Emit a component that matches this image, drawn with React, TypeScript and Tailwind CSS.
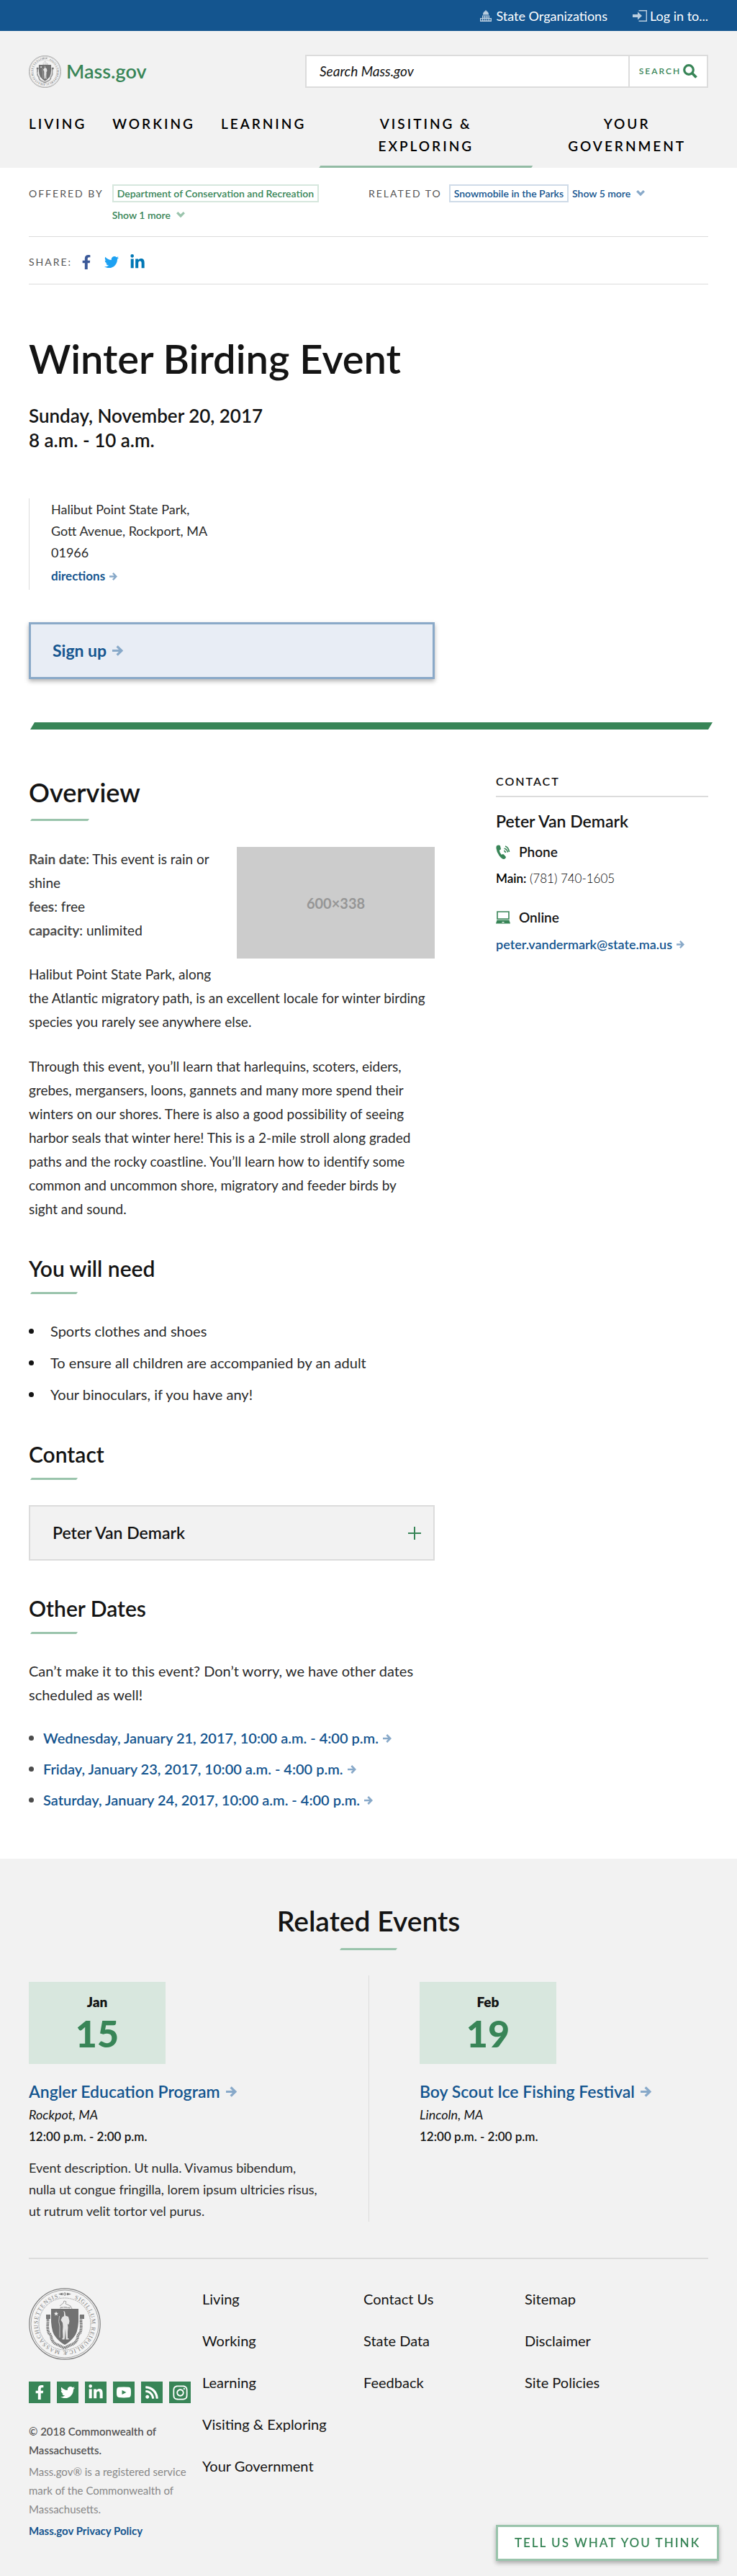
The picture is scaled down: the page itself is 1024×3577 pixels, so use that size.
import { useState, type ReactNode } from "react";
import { FaFacebookF, FaInstagram, FaLinkedinIn, FaRss, FaTwitter } from "react-icons/fa";

const slant = "[clip-path:polygon(2px_0,100%_0,calc(100%-2px)_100%,0_100%)]";

function Arrow({ className = "h-3 w-3" }: { className?: string }) {
  return (
    <svg viewBox="0 0 14 14" aria-hidden="true" className={`inline-block shrink-0 text-[#88a9c9] ${className}`}>
      <path d="M0 7h11M6.2 1.2 12 7l-5.800 5.800" fill="none" stroke="currentColor" strokeWidth="3" />
    </svg>
  );
}

function Chevron({ className }: { className: string }) {
  return (
    <svg viewBox="0 0 12 9" aria-hidden="true" className={`h-[9px] w-3 ${className}`}>
      <path d="M1.200 1.200 6 6l4.800-4.800" fill="none" stroke="currentColor" strokeWidth="3.200" />
    </svg>
  );
}

function Seal({ id, className }: { id: string; className: string }) {
  return (
    <svg viewBox="0 0 100 100" role="img" aria-label="State seal" className={className}>
      <defs>
        <path id={id} d="M50 12.500a37.500 37.500 0 1 1 0 75a37.500 37.500 0 1 1 0-75" />
      </defs>
      <circle cx="50" cy="50" r="49.200" fill="#f4f4f4" stroke="#7d7d7d" strokeWidth="1.200" />
      <circle cx="50" cy="50" r="47" fill="none" stroke="#8b8b8b" strokeWidth=".8" />
      <circle cx="50" cy="50" r="36" fill="none" stroke="#8b8b8b" strokeWidth="1" strokeDasharray="1 .8" />
      <g fill="#7b7b7b" fontFamily="Liberation Serif, serif" fontSize="8" letterSpacing="1">
        <text><textPath href={`#${id}`} startOffset="13.500">SIGILLUM</textPath></text>
        <text><textPath href={`#${id}`} startOffset="62.500">REIPUBLICÆ</textPath></text>
        <text><textPath href={`#${id}`} startOffset="124">MASSACHUSETTENSIS.</textPath></text>
      </g>
      <circle cx="50" cy="8.500" r="1.600" fill="none" stroke="#777" />
      <path d="m41 8.500 6-1.800v3.600zM59 8.500l-6-1.800v3.600z" fill="#777" />
      <path d="m43 25 5-4 1-3 3 1-1 3 7 3 2 4M44 27h3m2 0h4m2 0h3M43 28q7-3 14 0" fill="none" stroke="#a5a5a5" />
      <path d="M26.500 38v9q-1 11 1.500 16 3 2 3.500 7 2 7 9 9l9 4.500 9-4.500q7-2 9-9 .5-5 3.500-7 2.500-5 1.500-16v-9" fill="none" stroke="#777" strokeWidth="3.800" strokeDasharray="1.500 .7" />
      <path d="M24 37h6v6h-6zM71 37h6v6h-6z" fill="#777" />
      <path d="M31 29h38v18q-1 16-7 22-6 7-12 10-6-3-12-10-6-6-7-22z" fill="#727272" />
      <path d="m38 32.500.9 2.200 2.400.1-1.900 1.500.7 2.300-2.100-1.300-2 1.300.7-2.300-1.900-1.500 2.400-.1z" fill="#f4f4f4" />
      <path d="m49 34-1-2 2 .7.500 2.300.5 3.500 4 1.500 1.500 6-1 5-1.500-1 .5 5-.5 6v9h1.500v1.500h-4v-2l-.5-13-1 13-.5 2h-3v-1.500l1-1-.5-9 .5-6.500-.5-5-2.500-4 2-4 2.500-1.500z" fill="#e4e4e4" />
      <path d="M42.500 39q-2 8 .5 14v16" fill="none" stroke="#cfcfcf" strokeWidth=".9" />
    </svg>
  );
}

function Rule({ className = "w-[68px]" }: { className?: string }) {
  return <div className={`h-[3px] bg-[#9ac4ac] ${slant} ${className}`} />;
}

function Heading({ children }: { children: ReactNode }) {
  return (
    <>
      <h2 className="mt-[46px] text-3xl leading-10 font-semibold">{children}</h2>
      <Rule className="mt-[13px] ml-0.5 w-[66px]" />
    </>
  );
}

const socials = [
  { name: "Facebook", icon: <FaFacebookF className="h-5 w-5" /> },
  { name: "Twitter", icon: <FaTwitter className="h-5 w-5" /> },
  { name: "LinkedIn", icon: <FaLinkedinIn className="h-[22px] w-[22px]" /> },
  {
    name: "YouTube",
    icon: (
      <svg viewBox="0 0 20 16" className="h-4 w-5">
        <path fillRule="evenodd" fill="currentColor" d="M3 .8Q10 0 17 .8q2.500.2 2.800 3 .4 4 0 8-.3 3-2.800 3.300-7 .7-14 0-2.500-.3-2.800-3-.4-4 0-8Q.5 1 3 .8zM7.500 5v6l6-3z" />
      </svg>
    ),
  },
  { name: "RSS", icon: <FaRss className="h-5 w-5" /> },
  { name: "Instagram", icon: <FaInstagram className="h-[23px] w-[23px]" /> },
];

const dates = [
  "Wednesday, January 21, 2017, 10:00 a.m. - 4:00 p.m.",
  "Friday, January 23, 2017, 10:00 a.m. - 4:00 p.m.",
  "Saturday, January 24, 2017, 10:00 a.m. - 4:00 p.m.",
];

const events = [
  { month: "Jan", day: "15", title: "Angler Education Program", place: "Rockpot, MA", text: "Event description. Ut nulla. Vivamus bibendum, nulla ut congue fringilla, lorem ipsum ultricies risus, ut rutrum velit tortor vel purus." },
  { month: "Feb", day: "19", title: "Boy Scout Ice Fishing Festival", place: "Lincoln, MA", text: "" },
];

const footerLinks = [
  ["Living", "Working", "Learning", "Visiting & Exploring", "Your Government"],
  ["Contact Us", "State Data", "Feedback"],
  ["Sitemap", "Disclaimer", "Site Policies"],
];

function Header() {
  return (
    <header>
      <div className="flex h-[43px] items-center justify-end gap-[35px] bg-[#14558f] px-10 text-lg text-white">
        <a href="#orgs" className="flex items-center gap-1.5">
          <svg viewBox="0 0 16 16" className="h-4 w-4 text-[#b9cddf]" fill="currentColor" aria-hidden="true">
            <path d="M7.500 0h1v1.200Q11.500 2 12 5.500v1H4v-1Q4.500 2 7.500 1.200zM3 7.500h10V11h3v5H0v-5h3zm1.300 1v2h1.500v-2zm3 0v2h1.500v-2zm3 0v2h1.500v-2zM1.500 12v2.500H3V12zm3 0v2.500H6V12zm2.800 0v2.500h1.500V12zm2.700 0v2.500h1.500V12zm3 0v2.500h1.500V12z" fillRule="evenodd" />
          </svg>
          State Organizations
        </a>
        <button type="button" className="flex items-center gap-1">
          <svg viewBox="0 0 20 16" className="h-4 w-5 text-[#b9cddf]" aria-hidden="true">
            <path d="M8.500.7h10.800v14.600H8.500" fill="none" stroke="currentColor" strokeWidth="1.400" />
            <path d="M0 6h7V2.500L13 8l-6 5.500V10H0z" fill="currentColor" />
          </svg>
          Log in to...
        </button>
      </div>
      <div className="bg-[#f2f2f2] pt-[33px]">
        <div className="flex items-center justify-between px-10">
          <a href="#home" className="flex items-center gap-[7px] text-[27px] leading-8 font-semibold text-[#388557]">
            <Seal id="seal-small" className="h-[45px] w-[45px]" />
            Mass.gov
          </a>
          <form className="flex h-[46px] w-[560px] border-2 border-[#dcdcdc] bg-white" onSubmit={(e) => e.preventDefault()}>
            <input aria-label="Search Mass.gov" placeholder="Search Mass.gov" className="min-w-0 flex-1 bg-transparent px-[18px] text-[19px] italic outline-none placeholder:text-[#141414]" />
            <button type="submit" className="flex w-[109px] items-center justify-center gap-[3px] border-l-2 border-[#dcdcdc] text-xs font-semibold tracking-[2px] text-[#388557]">
              SEARCH
              <svg viewBox="0 0 20 20" className="h-5 w-5" fill="none" stroke="currentColor" aria-hidden="true">
                <circle cx="8" cy="8" r="6.300" strokeWidth="3.200" />
                <path d="m12.500 12.500 6 6" strokeWidth="3.800" />
              </svg>
            </button>
          </form>
        </div>
        <nav className="mt-5 flex px-[22px] text-[19px] leading-[31px] font-semibold tracking-[3px] text-black">
          <a href="#living" className="px-[18px] pt-[14px]">LIVING</a>
          <a href="#working" className="px-[18px] pt-[14px]">WORKING</a>
          <a href="#learning" className="px-[18px] pt-[14px]">LEARNING</a>
          <a href="#visiting" className="w-[297px] shrink-0 pt-[14px] text-center">
            VISITING &amp;<br />EXPLORING
            <span className={`mt-3 block h-[3px] bg-[#92bba4] ${slant}`} />
          </a>
          <a href="#government" className="flex-1 px-[18px] pt-[14px] text-center">
            YOUR<br />GOVERNMENT
          </a>
        </nav>
      </div>
    </header>
  );
}

function Relations() {
  return (
    <>
      <div className="grid grid-cols-2 border-b border-[#dcdcdc] pt-[23px] pb-[17px] text-sm leading-[25px]">
        <div className="flex items-start gap-3">
          <span className="tracking-[2px] whitespace-nowrap text-[#555]">OFFERED BY</span>
          <div className="font-semibold text-[#388557]">
            <a href="#dcr" className="block border-2 border-[#d6e7dd] px-[5px] leading-[21px]">Department of Conservation and Recreation</a>
            <button type="button" className="mt-[5px] flex items-center gap-2">Show 1 more <Chevron className="text-[#9ac4ac]" /></button>
          </div>
        </div>
        <div className="flex items-start gap-[5px]">
          <span className="mr-[5px] tracking-[2px] whitespace-nowrap text-[#555]">RELATED TO</span>
          <a href="#snow" className="border-2 border-[#cfdbe8] px-[5px] leading-[21px] font-semibold text-[#14558f]">Snowmobile in the Parks</a>
          <button type="button" className="flex items-center gap-2 font-semibold text-[#14558f]">Show 5 more <Chevron className="text-[#88a9c9]" /></button>
        </div>
      </div>
      <div className="flex h-[66px] items-center border-b border-[#dcdcdc] pt-[5px]">
        <span className="text-sm tracking-[2px] text-[#555]">SHARE:</span>
        <a href="#fb" aria-label="Facebook" className="ml-2.5 text-[#3b5998]"><FaFacebookF className="h-5 w-5" /></a>
        <a href="#tw" aria-label="Twitter" className="ml-[15px] text-[#1da1f2]"><FaTwitter className="h-5 w-5" /></a>
        <a href="#in" aria-label="LinkedIn" className="ml-[15px] text-[#0077b5]"><FaLinkedinIn className="h-[22px] w-[22px]" /></a>
      </div>
    </>
  );
}

function Sidebar() {
  return (
    <aside className="w-[295px] shrink-0">
      <h2 className="border-b-2 border-[#dcdcdc] pb-2 text-base leading-6 font-semibold tracking-[2px]">CONTACT</h2>
      <h3 className="mt-[18px] text-[23px] leading-[30px] font-semibold">Peter Van Demark</h3>
      <h4 className="mt-4 flex items-center gap-3 text-[19px] leading-6 font-semibold">
        <svg viewBox="0 0 20 20" className="h-5 w-5 text-[#388557]" aria-hidden="true">
          <path d="M1 1.500Q4-.5 6 1.500L7 6Q6 7.500 4.800 7.500 5 11 8 14q1.500-1.500 3-.5l3 3.500q0 2-2.500 3Q8 20 4.500 15T.5 5Q.3 3 1 1.500z" fill="currentColor" />
          <path d="M11 8.500q2 0 2.500 2.500M11.500 5.200q4 .5 5 5.300M13 2q4.500 1.500 5.500 8" fill="none" stroke="currentColor" strokeWidth="1.600" />
        </svg>
        Phone
      </h4>
      <p className="mt-[13px] text-[17px] leading-6 font-light text-black"><span className="font-semibold">Main:</span> (781) 740-1605</p>
      <h4 className="mt-[30px] flex items-center gap-3 text-[19px] leading-6 font-semibold">
        <svg viewBox="0 0 20 18" className="h-[18px] w-5 text-[#388557]" aria-hidden="true">
          <path d="M2 1h16v10H2z" fill="none" stroke="currentColor" strokeWidth="1.600" />
          <path fillRule="evenodd" d="M1.500 12.500h17L20 17.500H0zm7 2.500v1.200h3V15z" fill="currentColor" />
        </svg>
        Online
      </h4>
      <a href="mailto:peter.vandermark@state.ma.us" className="mt-[13px] flex items-center gap-1.5 text-lg leading-6 font-semibold text-[#14558f]">
        peter.vandermark@state.ma.us <Arrow className="h-[11px] w-[11px]" />
      </a>
    </aside>
  );
}

export default function App() {
  const [open, setOpen] = useState(false);
  return (
    <div className="bg-white font-['Lato',sans-serif] text-[#141414]">
      <Header />
      <main>
        <div className="px-10">
          <Relations />
          <h1 className="mt-[71px] text-[56px] leading-[64px] font-semibold">Winter Birding Event</h1>
          <p className="mt-[30px] text-[26px] leading-[34px] font-semibold">
            Sunday, November 20, 2017<br />8 a.m. - 10 a.m.
          </p>
          <address className="mt-16 border-l border-[#dcdcdc] pb-1 pl-[30px] text-lg leading-[30px] text-[#2b2b2b] not-italic">
            Halibut Point State Park,<br />Gott Avenue, Rockport, MA<br />01966
            <a href="#directions" className="mt-[3px] flex items-center gap-1.5 text-[17px] font-bold text-[#14558f]">
              directions <Arrow className="h-[11px] w-[11px]" />
            </a>
          </address>
          <a href="#signup" className="mt-[45px] flex h-[79px] max-w-[564px] items-center gap-2 border-[3px] border-[#8aa9c8] bg-[#e8edf5] px-[30px] text-[23px] font-bold text-[#14558f] shadow-[0_3px_6px_rgba(0,0,0,0.3)]">
            Sign up <Arrow className="h-[15px] w-[15px]" />
          </a>
          <div className="mt-[60px] -mr-1.5 ml-0.5 h-2.5 bg-[#388557] [clip-path:polygon(6px_0,100%_0,calc(100%-6px)_100%,0_100%)]" />
          <div className="mt-[60px] flex justify-between gap-10 pb-[65px]">
            <div className="min-w-0 max-w-[564px] flex-1 pt-1">
              <h2 className="text-4xl leading-[46px] font-semibold">Overview</h2>
              <Rule className="mt-[14px] ml-0.5 w-[82px]" />
              <div className="mt-9 text-[19px] leading-[33px] text-[#2b2b2b]">
                <div role="img" aria-label="Placeholder" className="float-right mb-3 ml-5 flex h-[155px] w-[275px] items-center justify-center bg-[#ccc] text-xl font-bold text-[#969696]">600×338</div>
                <p>
                  <strong className="font-bold text-[#4c4c4c]">Rain date</strong>: This event is rain or shine<br />
                  <strong className="font-bold text-[#4c4c4c]">fees</strong>: free<br />
                  <strong className="font-bold text-[#4c4c4c]">capacity</strong>: unlimited
                </p>
                <p className="mt-7">Halibut Point State Park, along the Atlantic migratory path, is an excellent locale for winter birding species you rarely see anywhere else.</p>
                <p className="mt-[29px] pr-4">Through this event, you’ll learn that harlequins, scoters, eiders, grebes, mergansers, loons, gannets and many more spend their winters on our shores. There is also a good possibility of seeing harbor seals that winter here! This is a 2-mile stroll along graded paths and the rocky coastline. You’ll learn how to identify some common and uncommon shore, migratory and feeder birds by sight and sound.</p>
              </div>
              <Heading>You will need</Heading>
              <ul className="mt-[35px] flex flex-col gap-[11px] text-xl leading-[33px] text-[#2b2b2b]">
                {["Sports clothes and shoes", "To ensure all children are accompanied by an adult", "Your binoculars, if you have any!"].map((t) => (
                  <li key={t} className="flex items-center gap-[23px]"><span className="h-[7px] w-[7px] rounded-full bg-[#141414]" />{t}</li>
                ))}
              </ul>
              <Heading>Contact</Heading>
              <button type="button" aria-expanded={open} onClick={() => setOpen(!open)} className="mt-[35px] flex h-[77px] w-full items-center justify-between border-2 border-[#dcdcdc] bg-[#f2f2f2] pr-[17px] pl-[31px] text-[23px] font-semibold">
                Peter Van Demark
                <svg viewBox="0 0 18 18" className="h-[18px] w-[18px]" aria-hidden="true"><path d="M9 0v18M0 9h18" stroke="#388557" strokeWidth="2" /></svg>
              </button>
              <Heading>Other Dates</Heading>
              <p className="mt-[35px] text-xl leading-[33px] text-[#2b2b2b]">Can’t make it to this event? Don’t worry, we have other dates scheduled as well!</p>
              <ul className="mt-[27px] flex flex-col gap-2.5 text-xl leading-[33px] font-semibold text-[#14558f]">
                {dates.map((d) => (
                  <li key={d} className="flex items-center gap-[13px]">
                    <span className="h-[7px] w-[7px] rounded-full bg-[#4c4c4c]" />
                    <a href="#date" className="flex items-center gap-1.5">{d} <Arrow /></a>
                  </li>
                ))}
              </ul>
            </div>
            <Sidebar />
          </div>
        </div>
        <section className="bg-[#f2f2f2] px-10 pt-[61px] pb-[50px]">
          <h2 className="text-center text-[39px] leading-[50px] font-semibold">Related Events</h2>
          <Rule className="mx-auto mt-[13px] w-20" />
          <div className="mt-[35px] grid grid-cols-2">
            {events.map((e, i) => (
              <article key={e.title} className={i ? "border-l border-[#dcdcdc] pt-[9px] pl-[70px]" : "pt-[9px] pr-16"}>
                <div className="h-[114px] w-[190px] bg-[#d8e7de] pt-4 text-center">
                  <div className="text-[19px] leading-6 font-extrabold">{e.month}</div>
                  <div className="mt-[3px] text-[52px] leading-[56px] font-black text-[#388557]">{e.day}</div>
                </div>
                <a href="#event" className="mt-[23px] flex items-center gap-2 text-[23px] leading-[30px] font-semibold text-[#14558f]">{e.title} <Arrow className="h-[15px] w-[15px]" /></a>
                <p className="mt-0.5 text-lg leading-[30px] italic">{e.place}</p>
                <p className="mt-px text-[17px] leading-[30px] font-semibold">12:00 p.m. - 2:00 p.m.</p>
                {e.text && <p className="mt-[13px] text-lg leading-[30px] text-[#2b2b2b]">{e.text}</p>}
              </article>
            ))}
          </div>
        </section>
      </main>
      <footer className="bg-[#f2f2f2] px-10 pb-[50px]">
        <div className="flex border-t-2 border-[#dcdcdc] pt-10">
          <div className="w-[241px] shrink-0 pr-3 text-[15px] leading-[26px]">
            <Seal id="seal-large" className="h-[100px] w-[100px]" />
            <div className="mt-[30px] flex gap-[9px]">
              {socials.map((s) => (
                <a key={s.name} href="#social" aria-label={s.name} className="flex h-[30px] w-[30px] shrink-0 items-center justify-center bg-[#388557] text-white">{s.icon}</a>
              ))}
            </div>
            <p className="mt-[26px] font-semibold text-[#555]">© 2018 Commonwealth of Massachusetts.</p>
            <p className="mt-1 text-[#888]">Mass.gov® is a registered service mark of the Commonwealth of Massachusetts.</p>
            <a href="#privacy" className="mt-1 block font-bold text-[#14558f]">Mass.gov Privacy Policy</a>
          </div>
          <nav className="grid flex-1 grid-cols-[224px_224px_1fr] text-xl leading-[30px]">
            {footerLinks.map((col) => (
              <ul key={col[0]} className="flex flex-col gap-7">
                {col.map((l) => (
                  <li key={l}><a href="#link">{l}</a></li>
                ))}
              </ul>
            ))}
          </nav>
        </div>
      </footer>
      <button type="button" className="fixed right-[25px] bottom-[21px] h-[50px] w-[310px] border-[3px] border-[#9ac4ac] bg-white text-[17px] font-semibold tracking-[2px] text-[#388557] shadow-[0_3px_6px_rgba(0,0,0,0.3)]">
        TELL US WHAT YOU THINK
      </button>
    </div>
  );
}
